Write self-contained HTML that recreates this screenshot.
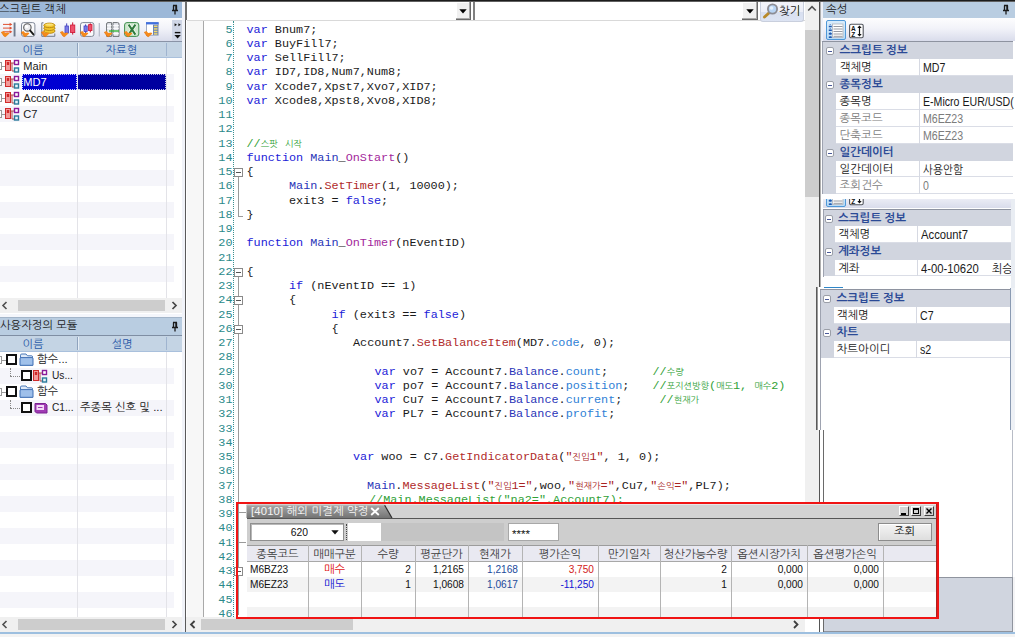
<!DOCTYPE html>
<html lang="ko"><head><meta charset="utf-8"><title>Script Editor</title>
<style>
html,body{margin:0;padding:0;}
body{width:1015px;height:637px;overflow:hidden;background:#fff;position:relative;
 font-family:"Liberation Sans","NanumGothic",sans-serif;font-size:12px;color:#000;}
.a{position:absolute;box-sizing:border-box;}
.t{position:absolute;white-space:pre;line-height:1;}
.ui{font-family:"Liberation Sans","NanumGothic",sans-serif;}
.code{font-family:"Liberation Mono","NanumGothic",monospace;font-size:11.8px;}
.ln{position:absolute;left:187.5px;width:45px;text-align:right;color:#2b8a8a;white-space:pre;height:14.25px;line-height:14.25px;}
.cl{position:absolute;left:247px;white-space:pre;height:14.25px;line-height:14.25px;color:#1a1a1a;}
.k{color:#2222d8;}
.o{color:#2a35b8;}
.m{color:#b02a2a;}
.f{color:#a3289b;}
.p{color:#2f7fd6;}
.c{color:#2fa136;}
.s{color:#a82222;}
.kr{font-family:"Liberation Sans","NanumGothic",sans-serif;font-size:9px;}
.gul{font-family:"Liberation Sans","NanumGothic",sans-serif;font-size:12px;}
</style></head>
<body>
<div class="a" style="left:0px;top:2px;width:186px;height:635px;background:#ffffff;"></div>
<div class="a" style="left:0px;top:2px;width:182px;height:16px;background:#9cb8d8;"></div>
<div class="t ui" style="left:-1px;top:4px;font-size:11.3px;color:#1c1c1c;">스크립트 객체</div>
<svg class="a" style="left:169.5px;top:3.5px" width="10" height="12" viewBox="0 0 10 12"><path d="M3 1.5h4M3.5 1.5v4.5M6.5 1.5v4.5M2 6.5h6M5 6.5v4" stroke="#1a1a1a" stroke-width="1.3" fill="none"/><rect x="5.3" y="1.5" width="1.6" height="5" fill="#1a1a1a"/></svg>
<div class="a" style="left:0px;top:18px;width:182px;height:23px;background:linear-gradient(#fdfdfe 0%,#f2f3f9 45%,#d9dceb 100%);"></div>
<div class="a" style="left:172px;top:20px;width:10px;height:21px;background:#cfd6e6;"></div>
<div class="a" style="left:0px;top:41px;width:182px;height:1px;background:#8a93a6;"></div>
<div class="a" style="left:0px;top:42px;width:182px;height:15px;background:#c4d4e4;"></div>
<div class="a" style="left:0px;top:57px;width:182px;height:1px;background:#a9c0dc;"></div>
<div class="a" style="left:77px;top:43px;width:1px;height:13px;background:#8fa3bd;"></div>
<div class="a" style="left:78px;top:43px;width:1px;height:13px;background:#e6eef6;"></div>
<div class="a" style="left:166px;top:43px;width:1px;height:13px;background:#9fb4cf;"></div>
<div class="t ui" style="left:22.5px;top:45px;font-size:11.3px;color:#2a5aa8;">이름</div>
<div class="t ui" style="left:105.5px;top:45px;font-size:11.3px;color:#2a5aa8;">자료형</div>
<div class="a" style="left:0px;top:74px;width:174px;height:16px;background:#f5f5fa;"></div>
<div class="a" style="left:0px;top:106px;width:174px;height:16px;background:#f5f5fa;"></div>
<div class="a" style="left:0px;top:138px;width:174px;height:16px;background:#f5f5fa;"></div>
<div class="a" style="left:0px;top:170px;width:174px;height:16px;background:#f5f5fa;"></div>
<div class="a" style="left:0px;top:202px;width:174px;height:16px;background:#f5f5fa;"></div>
<div class="a" style="left:0px;top:234px;width:174px;height:16px;background:#f5f5fa;"></div>
<div class="a" style="left:0px;top:266px;width:174px;height:16px;background:#f5f5fa;"></div>
<div class="a" style="left:77px;top:58px;width:1px;height:240px;background:#e3e3e8;"></div>
<div class="a" style="left:166px;top:58px;width:1px;height:240px;background:#e3e3e8;"></div>
<div class="a" style="left:22px;top:74px;width:55px;height:16px;background:#0000d2;border:1px dotted #d8d8ff;"></div>
<div class="a" style="left:78px;top:74px;width:88px;height:16px;background:#00009f;border:1px dotted #c8c8e8;border-left:none;"></div>
<div class="a" style="left:0px;top:62px;width:2px;height:8px;background:#fff;border:1px solid #9a9a9a;border-left:none;"></div>
<div class="a" style="left:2px;top:66px;width:3px;height:1px;background:#9a9a9a;"></div>
<svg class="a" style="left:5px;top:59px" width="15" height="15" viewBox="0 0 15 15"><rect x="0.5" y="1.5" width="5" height="10" fill="#f29a9a" stroke="#d02a2a" stroke-width="1"/><rect x="1.8" y="3" width="2.4" height="3" fill="#d02a2a"/><path d="M5.5 4h3.5M7 4v8h2" stroke="#b04a4a" stroke-width="1" fill="none"/><rect x="9.5" y="1.5" width="4" height="4" fill="#fff" stroke="#8a1a9a" stroke-width="1.4"/><rect x="9.5" y="9" width="4" height="4" fill="#e6f4fa" stroke="#2a7a9a" stroke-width="1.4"/></svg>
<div class="t ui" style="left:23.3px;top:60.5px;font-size:11.1px;color:#1a1a1a;">Main</div>
<div class="a" style="left:0px;top:78px;width:2px;height:8px;background:#fff;border:1px solid #9a9a9a;border-left:none;"></div>
<div class="a" style="left:2px;top:82px;width:3px;height:1px;background:#9a9a9a;"></div>
<svg class="a" style="left:5px;top:75px" width="15" height="15" viewBox="0 0 15 15"><rect x="0.5" y="1.5" width="5" height="10" fill="#f29a9a" stroke="#d02a2a" stroke-width="1"/><rect x="1.8" y="3" width="2.4" height="3" fill="#d02a2a"/><path d="M5.5 4h3.5M7 4v8h2" stroke="#b04a4a" stroke-width="1" fill="none"/><rect x="9.5" y="1.5" width="4" height="4" fill="#fff" stroke="#8a1a9a" stroke-width="1.4"/><rect x="9.5" y="9" width="4" height="4" fill="#e6f4fa" stroke="#2a7a9a" stroke-width="1.4"/></svg>
<div class="t ui" style="left:23.3px;top:76.5px;font-size:11.1px;color:#fff;">MD7</div>
<div class="a" style="left:0px;top:94px;width:2px;height:8px;background:#fff;border:1px solid #9a9a9a;border-left:none;"></div>
<div class="a" style="left:2px;top:98px;width:3px;height:1px;background:#9a9a9a;"></div>
<svg class="a" style="left:5px;top:91px" width="15" height="15" viewBox="0 0 15 15"><rect x="0.5" y="1.5" width="5" height="10" fill="#f29a9a" stroke="#d02a2a" stroke-width="1"/><rect x="1.8" y="3" width="2.4" height="3" fill="#d02a2a"/><path d="M5.5 4h3.5M7 4v8h2" stroke="#b04a4a" stroke-width="1" fill="none"/><rect x="9.5" y="1.5" width="4" height="4" fill="#fff" stroke="#8a1a9a" stroke-width="1.4"/><rect x="9.5" y="9" width="4" height="4" fill="#e6f4fa" stroke="#2a7a9a" stroke-width="1.4"/></svg>
<div class="t ui" style="left:23.3px;top:92.5px;font-size:11.1px;color:#1a1a1a;">Account7</div>
<div class="a" style="left:0px;top:110px;width:2px;height:8px;background:#fff;border:1px solid #9a9a9a;border-left:none;"></div>
<div class="a" style="left:2px;top:114px;width:3px;height:1px;background:#9a9a9a;"></div>
<svg class="a" style="left:5px;top:107px" width="15" height="15" viewBox="0 0 15 15"><rect x="0.5" y="1.5" width="5" height="10" fill="#f29a9a" stroke="#d02a2a" stroke-width="1"/><rect x="1.8" y="3" width="2.4" height="3" fill="#d02a2a"/><path d="M5.5 4h3.5M7 4v8h2" stroke="#b04a4a" stroke-width="1" fill="none"/><rect x="9.5" y="1.5" width="4" height="4" fill="#fff" stroke="#8a1a9a" stroke-width="1.4"/><rect x="9.5" y="9" width="4" height="4" fill="#e6f4fa" stroke="#2a7a9a" stroke-width="1.4"/></svg>
<div class="t ui" style="left:23.3px;top:108.5px;font-size:11.1px;color:#1a1a1a;">C7</div>
<div class="a" style="left:0px;top:298px;width:182px;height:15px;background:#f0f0f0;"></div>
<div class="a" style="left:18px;top:300px;width:147px;height:11px;background:#cdcdcd;"></div>
<svg class="a" style="left:0px;top:298px" width="182" height="15" viewBox="0 0 182 15"><path d="M6.5 4.0L3 7.5L6.5 11.0" stroke="#505050" stroke-width="1.6" fill="none"/><path d="M172.5 4.0L176 7.5L172.5 11.0" stroke="#454545" stroke-width="1.7" fill="none"/></svg>
<div class="a" style="left:0px;top:314px;width:186px;height:4px;background:#f4f6fb;"></div>
<div class="a" style="left:0px;top:317px;width:182px;height:18px;background:#b9cde1;"></div>
<div class="a" style="left:0px;top:317px;width:182px;height:1px;background:#a3b5c9;"></div>
<div class="t ui" style="left:0px;top:320px;font-size:11.3px;color:#1c1c1c;">사용자정의 모듈</div>
<svg class="a" style="left:169.5px;top:320.5px" width="10" height="12" viewBox="0 0 10 12"><path d="M3 1.5h4M3.5 1.5v4.5M6.5 1.5v4.5M2 6.5h6M5 6.5v4" stroke="#1a1a1a" stroke-width="1.3" fill="none"/><rect x="5.3" y="1.5" width="1.6" height="5" fill="#1a1a1a"/></svg>
<div class="a" style="left:0px;top:335px;width:182px;height:1px;background:#7f8ea3;"></div>
<div class="a" style="left:0px;top:336px;width:182px;height:15px;background:#c4d4e4;"></div>
<div class="a" style="left:0px;top:351px;width:182px;height:1px;background:#a9c0dc;"></div>
<div class="a" style="left:77px;top:337px;width:1px;height:13px;background:#8fa3bd;"></div>
<div class="a" style="left:78px;top:337px;width:1px;height:13px;background:#e6eef6;"></div>
<div class="a" style="left:166px;top:337px;width:1px;height:13px;background:#9fb4cf;"></div>
<div class="t ui" style="left:22.5px;top:339px;font-size:11.3px;color:#2a5aa8;">이름</div>
<div class="t ui" style="left:111.5px;top:339px;font-size:11.3px;color:#2a5aa8;">설명</div>
<div class="a" style="left:0px;top:368px;width:174px;height:16px;background:#f5f5fa;"></div>
<div class="a" style="left:0px;top:400px;width:174px;height:16px;background:#f5f5fa;"></div>
<div class="a" style="left:0px;top:432px;width:174px;height:16px;background:#f5f5fa;"></div>
<div class="a" style="left:0px;top:464px;width:174px;height:16px;background:#f5f5fa;"></div>
<div class="a" style="left:0px;top:496px;width:174px;height:16px;background:#f5f5fa;"></div>
<div class="a" style="left:0px;top:528px;width:174px;height:16px;background:#f5f5fa;"></div>
<div class="a" style="left:0px;top:560px;width:174px;height:16px;background:#f5f5fa;"></div>
<div class="a" style="left:0px;top:592px;width:174px;height:16px;background:#f5f5fa;"></div>
<div class="a" style="left:77px;top:352px;width:1px;height:265px;background:#e3e3e8;"></div>
<div class="a" style="left:166px;top:352px;width:1px;height:265px;background:#e3e3e8;"></div>
<div class="a" style="left:0px;top:356px;width:2px;height:8px;background:#fff;border:1px solid #9a9a9a;border-left:none;"></div>
<div class="a" style="left:2px;top:360px;width:4px;height:1px;background:#9a9a9a;"></div>
<div class="a" style="left:6px;top:354px;width:11px;height:11px;background:#fff;border:2px solid #111;"></div>
<svg class="a" style="left:19px;top:353px" width="15" height="13" viewBox="0 0 15 13"><path d="M1.5 12V2.2Q1.5 1 2.8 1H7l1.5 1.8h4.2Q13.5 2.8 13.5 4v8z" fill="#dfeaf8" stroke="#4a78b8" stroke-width="1"/><path d="M1 12.3V5.6Q1 4.6 2 4.6h11q1 0 1 1v6.7z" fill="#9fc0ea" stroke="#3f6fb3" stroke-width="1"/></svg>
<div class="t ui" style="left:37px;top:354px;font-size:11.3px;color:#1a1a1a;">함수...</div>
<div class="a" style="left:10px;top:368px;width:1px;height:8px;border-left:1px dotted #888;"></div>
<div class="a" style="left:10px;top:376px;width:10px;height:1px;border-top:1px dotted #888;"></div>
<div class="a" style="left:21px;top:370px;width:11px;height:11px;background:#fff;border:2px solid #111;"></div>
<svg class="a" style="left:33px;top:369px" width="15" height="15" viewBox="0 0 15 15"><rect x="0.5" y="1.5" width="5" height="10" fill="#f29a9a" stroke="#d02a2a" stroke-width="1"/><rect x="1.8" y="3" width="2.4" height="3" fill="#d02a2a"/><path d="M5.5 4h3.5M7 4v8h2" stroke="#b04a4a" stroke-width="1" fill="none"/><rect x="9.5" y="1.5" width="4" height="4" fill="#fff" stroke="#8a1a9a" stroke-width="1.4"/><rect x="9.5" y="9" width="4" height="4" fill="#e6f4fa" stroke="#2a7a9a" stroke-width="1.4"/></svg>
<div class="t ui" style="left:52px;top:370.5px;font-size:10.2px;color:#1a1a1a;">Us...</div>
<div class="a" style="left:0px;top:388px;width:2px;height:8px;background:#fff;border:1px solid #9a9a9a;border-left:none;"></div>
<div class="a" style="left:2px;top:392px;width:4px;height:1px;background:#9a9a9a;"></div>
<div class="a" style="left:6px;top:386px;width:11px;height:11px;background:#fff;border:2px solid #111;"></div>
<svg class="a" style="left:19px;top:385px" width="15" height="13" viewBox="0 0 15 13"><path d="M1.5 12V2.2Q1.5 1 2.8 1H7l1.5 1.8h4.2Q13.5 2.8 13.5 4v8z" fill="#dfeaf8" stroke="#4a78b8" stroke-width="1"/><path d="M1 12.3V5.6Q1 4.6 2 4.6h11q1 0 1 1v6.7z" fill="#9fc0ea" stroke="#3f6fb3" stroke-width="1"/></svg>
<div class="t ui" style="left:37px;top:386px;font-size:11.3px;color:#1a1a1a;">함수</div>
<div class="a" style="left:10px;top:400px;width:1px;height:8px;border-left:1px dotted #888;"></div>
<div class="a" style="left:10px;top:408px;width:10px;height:1px;border-top:1px dotted #888;"></div>
<div class="a" style="left:21px;top:402px;width:11px;height:11px;background:#fff;border:2px solid #111;"></div>
<svg class="a" style="left:34px;top:402px" width="14" height="12" viewBox="0 0 14 12"><path d="M1 1.5h10.5l1.5 1.5v8H2.5L1 9.5z" fill="#a03cb4" stroke="#7a2090" stroke-width="1"/><rect x="2.5" y="3" width="7.5" height="5" fill="#f3d9f7"/><path d="M4 5.5h4.5" stroke="#a03cb4" stroke-width="1"/></svg>
<div class="t ui" style="left:52px;top:402.5px;font-size:10.2px;color:#1a1a1a;">C1...</div>
<div class="t ui" style="left:80px;top:402px;font-size:11.3px;color:#1a1a1a;">주종목 신호 및 ...</div>
<div class="a" style="left:0px;top:617px;width:182px;height:15px;background:#f0f0f0;"></div>
<div class="a" style="left:18px;top:619px;width:147px;height:11px;background:#cdcdcd;"></div>
<svg class="a" style="left:0px;top:617px" width="182" height="15" viewBox="0 0 182 15"><path d="M6.5 4.0L3 7.5L6.5 11.0" stroke="#505050" stroke-width="1.6" fill="none"/><path d="M172.5 4.0L176 7.5L172.5 11.0" stroke="#454545" stroke-width="1.7" fill="none"/></svg>
<div class="a" style="left:182px;top:2px;width:4px;height:630px;background:#f1f3f9;"></div>
<div class="a" style="left:185px;top:20px;width:1px;height:612px;background:#5a5a5a;"></div>
<div class="a" style="left:185.4px;top:2px;width:2.2px;height:18px;background:#6e6e6e;"></div>
<div class="a" style="left:0px;top:632px;width:1015px;height:2px;background:#9dbfdf;"></div>
<div class="a" style="left:0px;top:634px;width:1015px;height:3px;background:#f3f3f3;"></div>
<svg class="a" style="left:0;top:18px" width="182" height="23" viewBox="0 18 182 23"><path d="M3 24.4H11" stroke="#e05030" stroke-width="1"/><path d="M9.6 22.799999999999997L12.4 24.4L9.6 26.0z" fill="#e05030"/><path d="M3 28.1H11" stroke="#e05030" stroke-width="1"/><path d="M9.6 26.5L12.4 28.1L9.6 29.700000000000003z" fill="#e05030"/><path d="M3 31.8H11" stroke="#e05030" stroke-width="1"/><path d="M9.6 30.2L12.4 31.8L9.6 33.4z" fill="#e05030"/><rect x="13.6" y="22.5" width="1.9" height="14" fill="#6f7a8c"/><path transform="translate(1,30.2)" d="M0.2 1.8L2.4 0.8L4.2 2.9L7.2 2.2L8.4 3.4L4.9 6.5L3 6z" fill="#f58a1c"/><path transform="translate(1,30.2)" d="M0.2 1.8L3 6L4.9 6.5" fill="none" stroke="#e0700c" stroke-width="0.6"/><rect x="21.5" y="22.6" width="13.4" height="13.8" rx="2.2" fill="#fafafc" stroke="#7f8796" stroke-width="1"/><circle cx="27.4" cy="27.4" r="3.7" fill="#ececf0" stroke="#5a5a5a" stroke-width="1.1"/><circle cx="26.6" cy="26.6" r="1.6" fill="#fff"/><path d="M30.2 30.6L33.4 34.4" stroke="#1a1a1a" stroke-width="1.9" stroke-linecap="round"/><path transform="translate(21,30.2)" d="M0.2 1.8L2.4 0.8L4.2 2.9L7.2 2.2L8.4 3.4L4.9 6.5L3 6z" fill="#f58a1c"/><path transform="translate(21,30.2)" d="M0.2 1.8L3 6L4.9 6.5" fill="none" stroke="#e0700c" stroke-width="0.6"/><path d="M43.5 22.8H41.8V36.3H54.8V33.5" fill="none" stroke="#6f7a8c" stroke-width="1"/><ellipse cx="49.4" cy="31" rx="5.6" ry="2.3" fill="#f3c62e" stroke="#b3820c" stroke-width="0.9"/><ellipse cx="49.4" cy="28.2" rx="5.6" ry="2.3" fill="#f3c62e" stroke="#b3820c" stroke-width="0.9"/><ellipse cx="49.4" cy="25.4" rx="5.6" ry="2.3" fill="#f3c62e" stroke="#b3820c" stroke-width="0.9"/><ellipse cx="49.4" cy="24.6" rx="4" ry="1.2" fill="#fbe27a"/><path transform="translate(41,30.2)" d="M0.2 1.8L2.4 0.8L4.2 2.9L7.2 2.2L8.4 3.4L4.9 6.5L3 6z" fill="#f58a1c"/><path transform="translate(41,30.2)" d="M0.2 1.8L3 6L4.9 6.5" fill="none" stroke="#e0700c" stroke-width="0.6"/><path d="M66.7 23.4V34.2" stroke="#3a3ab8" stroke-width="1"/><rect x="65" y="26" width="3.4" height="7" fill="#7a7ae8" stroke="#4444c0" stroke-width="0.8"/><path d="M72.7 22.4V34.6" stroke="#c8102c" stroke-width="1"/><rect x="70.6" y="25" width="4.2" height="7.6" fill="#f0506c" stroke="#cc1434" stroke-width="0.8"/><path transform="translate(60,30.2)" d="M0.2 1.8L2.4 0.8L4.2 2.9L7.2 2.2L8.4 3.4L4.9 6.5L3 6z" fill="#f58a1c"/><path transform="translate(60,30.2)" d="M0.2 1.8L3 6L4.9 6.5" fill="none" stroke="#e0700c" stroke-width="0.6"/><rect x="80.5" y="22.6" width="13.4" height="13.8" rx="2.2" fill="#fafafc" stroke="#7f8796" stroke-width="1"/><path d="M85.6 24.4V33" stroke="#3a3ab8" stroke-width="1"/><rect x="84" y="26" width="3.2" height="5.4" fill="#7a7ae8" stroke="#4444c0" stroke-width="0.8"/><path d="M90.3 23.4V32.4" stroke="#c8102c" stroke-width="1"/><rect x="88.6" y="24.6" width="3.4" height="6" fill="#f0506c" stroke="#cc1434" stroke-width="0.8"/><path transform="translate(80,30.2)" d="M0.2 1.8L2.4 0.8L4.2 2.9L7.2 2.2L8.4 3.4L4.9 6.5L3 6z" fill="#f58a1c"/><path transform="translate(80,30.2)" d="M0.2 1.8L3 6L4.9 6.5" fill="none" stroke="#e0700c" stroke-width="0.6"/><path d="M99.3 23V36.4" stroke="#b4b8c8" stroke-width="1.2"/><path d="M106.6 36.4V24Q106.6 22.6 108 22.6H111.6V36.4zM113 22.6H117.6Q119 22.6 119 24V36.4H113z" fill="#e6e8ee" stroke="#6e7276" stroke-width="1"/><path d="M107 25.6H111.5M113.2 25.6H118.8M107 28.4H111.5M113.2 28.4H118.8M107 33.6H111.5M113.2 33.6H118.8" stroke="#fafafc" stroke-width="1.1"/><path d="M109 31H119" stroke="#2fb52f" stroke-width="1.3"/><path transform="translate(104,30.2)" d="M0.2 1.8L2.4 0.8L4.2 2.9L7.2 2.2L8.4 3.4L4.9 6.5L3 6z" fill="#f58a1c"/><path transform="translate(104,30.2)" d="M0.2 1.8L3 6L4.9 6.5" fill="none" stroke="#e0700c" stroke-width="0.6"/><rect x="124.6" y="22.6" width="14.2" height="13.8" rx="2.4" fill="#cfe8cf" stroke="#3f8f4f" stroke-width="1"/><path d="M128.6 24.6L135.4 34.6M135.4 24.6L128.6 34.6" stroke="#f2faf2" stroke-width="3.6"/><path d="M128.6 24.6L135.4 34.6M135.4 24.6L128.6 34.6" stroke="#2f7a3c" stroke-width="2"/><path transform="translate(124,30.2)" d="M0.2 1.8L2.4 0.8L4.2 2.9L7.2 2.2L8.4 3.4L4.9 6.5L3 6z" fill="#f58a1c"/><path transform="translate(124,30.2)" d="M0.2 1.8L3 6L4.9 6.5" fill="none" stroke="#e0700c" stroke-width="0.6"/><rect x="146.4" y="22.6" width="11.8" height="12.6" fill="#fff" stroke="#8a98b8" stroke-width="0.8"/><rect x="146" y="22.2" width="12.6" height="2.2" fill="#3f6fe0"/><rect x="153" y="24.6" width="5" height="10.4" fill="#6f86b4"/><rect x="154" y="25.6" width="3.4" height="1.4" fill="#f5dc6a"/><rect x="154" y="28.2" width="3.4" height="1.4" fill="#f5dc6a"/><rect x="154" y="30.8" width="3.4" height="1.4" fill="#f5dc6a"/><rect x="154" y="33.2" width="3.4" height="1.4" fill="#f5dc6a"/><path transform="translate(144,30.2)" d="M0.2 1.8L2.4 0.8L4.2 2.9L7.2 2.2L8.4 3.4L4.9 6.5L3 6z" fill="#f58a1c"/><path transform="translate(144,30.2)" d="M0.2 1.8L3 6L4.9 6.5" fill="none" stroke="#e0700c" stroke-width="0.6"/><path d="M174.6 23.2L177 24.7L174.6 26.2zM178.4 23.2L180.8 24.7L178.4 26.2z" fill="#111"/><path d="M174.8 32.6H180.4" stroke="#111" stroke-width="1.4"/><path d="M174.4 35H180.8L177.6 38.4z" fill="#111"/></svg>
<div class="a" style="left:187px;top:2px;width:618px;height:18px;background:#ffffff;"></div>
<div class="a" style="left:187px;top:20px;width:618px;height:1px;background:#d9d9d9;"></div>
<div class="a" style="left:456px;top:2px;width:15px;height:18px;background:#f0f0f0;border-right:1px solid #6a6a6a;border-bottom:1px solid #6a6a6a;box-shadow:inset -1px -1px 0 #a8a8a8, inset 1px 1px 0 #fff;"></div>
<svg class="a" style="left:459.0px;top:9px" width="8" height="5" viewBox="0 0 8 5"><path d="M0.3 0.3h7.4L4 4.4z" fill="#000"/></svg>
<div class="a" style="left:473px;top:2px;width:2px;height:18px;background:#808080;"></div>
<div class="a" style="left:742px;top:2px;width:16px;height:18px;background:#f0f0f0;border-right:1px solid #6a6a6a;border-bottom:1px solid #6a6a6a;box-shadow:inset -1px -1px 0 #a8a8a8, inset 1px 1px 0 #fff;"></div>
<svg class="a" style="left:745.5px;top:9px" width="8" height="5" viewBox="0 0 8 5"><path d="M0.3 0.3h7.4L4 4.4z" fill="#000"/></svg>
<div class="a" style="left:760px;top:2px;width:44px;height:20px;background:linear-gradient(#f3f4fa 0%,#eceef7 50%,#d8dff0 52%,#dde4f3 100%);border:1px solid #c9cfdd;border-top:none;border-radius:0 0 3px 3px;"></div>
<svg class="a" style="left:762px;top:3px" width="17" height="17" viewBox="0 0 17 17"><path d="M7.5 9.5L2.5 14" stroke="#b98a2a" stroke-width="3" stroke-linecap="round"/><circle cx="10.5" cy="6" r="4.6" fill="#b8d4f4" stroke="#8c8c94" stroke-width="1.8"/><circle cx="9.6" cy="5" r="1.8" fill="#e4f0fc"/></svg>
<div class="t ui" style="left:779px;top:5.5px;font-size:11.5px;color:#1a1a1a;">찾기</div>
<div class="a" style="left:798px;top:5px;width:1px;height:11px;background:#555;"></div>
<div class="a" style="left:187px;top:21px;width:16px;height:596px;background:#f7f7f7;"></div>
<div class="a" style="left:203px;top:21px;width:1px;height:596px;background:#a9a9a9;"></div>
<div class="a" style="left:233px;top:21px;width:1px;height:596px;border-left:1px dotted #3a8f8f;"></div>
<div class="a" style="left:805px;top:2px;width:14px;height:615px;background:#f0f0f0;"></div>
<div class="a" style="left:805px;top:30px;width:14px;height:167px;background:#cdcdcd;"></div>
<svg class="a" style="left:805px;top:2px" width="14" height="14" viewBox="0 0 14 14"><path d="M3.2 8.5L7 4.6L10.8 8.5" stroke="#505050" stroke-width="1.6" fill="none"/></svg>
<div class="code">
<div class="ln" style="top:22.50px">5</div><div class="cl" style="left:246.5px;top:22.50px"><span class="k">var</span> Bnum7;</div>
<div class="ln" style="top:36.75px">6</div><div class="cl" style="left:246.5px;top:36.75px"><span class="k">var</span> BuyFill7;</div>
<div class="ln" style="top:51.00px">7</div><div class="cl" style="left:246.5px;top:51.00px"><span class="k">var</span> SellFill7;</div>
<div class="ln" style="top:65.25px">8</div><div class="cl" style="left:246.5px;top:65.25px"><span class="k">var</span> ID7,ID8,Num7,Num8;</div>
<div class="ln" style="top:79.50px">9</div><div class="cl" style="left:246.5px;top:79.50px"><span class="k">var</span> Xcode7,Xpst7,Xvo7,XID7;</div>
<div class="ln" style="top:93.75px">10</div><div class="cl" style="left:246.5px;top:93.75px"><span class="k">var</span> Xcode8,Xpst8,Xvo8,XID8;</div>
<div class="ln" style="top:108.00px">11</div>
<div class="ln" style="top:122.25px">12</div>
<div class="ln" style="top:136.50px">13</div><div class="cl" style="left:246.5px;top:136.50px"><span class="c">//<span class="kr">스팟</span> <span class="kr">시작</span></span></div>
<div class="ln" style="top:150.75px">14</div><div class="cl" style="left:246.5px;top:150.75px"><span class="k">function</span> <span class="o">Main</span>_<span class="f">OnStart</span>()</div>
<div class="ln" style="top:165.00px">15</div><div class="cl" style="left:246.5px;top:165.00px">{</div>
<div class="ln" style="top:179.25px">16</div><div class="cl" style="left:289.0px;top:179.25px"><span class="o">Main</span>.<span class="m">SetTimer</span>(1, 10000);</div>
<div class="ln" style="top:193.50px">17</div><div class="cl" style="left:289.0px;top:193.50px">exit3 = <span class="k">false</span>;</div>
<div class="ln" style="top:207.75px">18</div><div class="cl" style="left:246.5px;top:207.75px">}</div>
<div class="ln" style="top:222.00px">19</div>
<div class="ln" style="top:236.25px">20</div><div class="cl" style="left:246.5px;top:236.25px"><span class="k">function</span> <span class="o">Main</span>_<span class="f">OnTimer</span>(nEventID)</div>
<div class="ln" style="top:250.50px">21</div>
<div class="ln" style="top:264.75px">22</div><div class="cl" style="left:246.5px;top:264.75px">{</div>
<div class="ln" style="top:279.00px">23</div><div class="cl" style="left:289.0px;top:279.00px"><span class="k">if</span> (nEventID == 1)</div>
<div class="ln" style="top:293.25px">24</div><div class="cl" style="left:289.0px;top:293.25px">{</div>
<div class="ln" style="top:307.50px">25</div><div class="cl" style="left:331.5px;top:307.50px"><span class="k">if</span> (exit3 == <span class="k">false</span>)</div>
<div class="ln" style="top:321.75px">26</div><div class="cl" style="left:331.5px;top:321.75px">{</div>
<div class="ln" style="top:336.00px">27</div><div class="cl" style="left:353.0px;top:336.00px">Account7.<span class="m">SetBalanceItem</span>(MD7.<span class="p">code</span>, 0);</div>
<div class="ln" style="top:350.25px">28</div>
<div class="ln" style="top:364.50px">29</div><div class="cl" style="left:374.5px;top:364.50px"><span class="k">var</span> vo7 = Account7.<span class="o">Balance</span>.<span class="p">count</span>;</div><div class="cl" style="left:652.5px;top:364.50px"><span class="c">//<span class="kr">수량</span></span></div>
<div class="ln" style="top:378.75px">30</div><div class="cl" style="left:374.5px;top:378.75px"><span class="k">var</span> po7 = Account7.<span class="o">Balance</span>.<span class="p">position</span>;</div><div class="cl" style="left:652.5px;top:378.75px"><span class="c">//<span class="kr">포지션방향</span>(<span class="kr">매도</span>1, <span class="kr">매수</span>2)</span></div>
<div class="ln" style="top:393.00px">31</div><div class="cl" style="left:374.5px;top:393.00px"><span class="k">var</span> Cu7 = Account7.<span class="o">Balance</span>.<span class="p">current</span>;</div><div class="cl" style="left:659.5px;top:393.00px"><span class="c">//<span class="kr">현재가</span></span></div>
<div class="ln" style="top:407.25px">32</div><div class="cl" style="left:374.5px;top:407.25px"><span class="k">var</span> PL7 = Account7.<span class="o">Balance</span>.<span class="p">profit</span>;</div>
<div class="ln" style="top:421.50px">33</div>
<div class="ln" style="top:435.75px">34</div>
<div class="ln" style="top:450.00px">35</div><div class="cl" style="left:353.0px;top:450.00px"><span class="k">var</span> woo = C7.<span class="m">GetIndicatorData</span>(<span class="s">&quot;<span class="kr">진입</span>1&quot;</span>, 1, 0);</div>
<div class="ln" style="top:464.25px">36</div>
<div class="ln" style="top:478.50px">37</div><div class="cl" style="left:367.0px;top:478.50px"><span class="o">Main</span>.<span class="m">MessageList</span>(<span class="s">&quot;<span class="kr">진입</span>1=&quot;</span>,woo,<span class="s">&quot;<span class="kr">현재가</span>=&quot;</span>,Cu7,<span class="s">&quot;<span class="kr">손익</span>=&quot;</span>,PL7);</div>
<div class="ln" style="top:492.75px">38</div><div class="cl" style="left:369.0px;top:492.75px"><span class="c">//Main.MessageList(&quot;na2=&quot;,Account7);</span></div>
<div class="ln" style="top:507.00px">39</div>
<div class="ln" style="top:521.25px">40</div>
<div class="ln" style="top:535.50px">41</div>
<div class="ln" style="top:549.75px">42</div>
<div class="ln" style="top:564.00px">43</div>
<div class="ln" style="top:578.25px">44</div>
<div class="ln" style="top:592.50px">45</div>
<div class="ln" style="top:606.75px">46</div>
</div>
<div class="a" style="left:238px;top:177.0px;width:1px;height:38.75px;background:#9a9a9a;"></div>
<div class="a" style="left:238px;top:215.75px;width:5px;height:1px;background:#9a9a9a;"></div>
<div class="a" style="left:234px;top:168px;width:9px;height:9px;background:#fff;border:1px solid #8a8a8a;"></div>
<div class="a" style="left:236px;top:172px;width:5px;height:1px;background:#555;"></div>
<div class="a" style="left:238px;top:276.75px;width:1px;height:338.0px;background:#9a9a9a;"></div>
<div class="a" style="left:234px;top:268px;width:9px;height:9px;background:#fff;border:1px solid #8a8a8a;"></div>
<div class="a" style="left:236px;top:272px;width:5px;height:1px;background:#555;"></div>
<div class="a" style="left:234px;top:296px;width:9px;height:9px;background:#fff;border:1px solid #8a8a8a;"></div>
<div class="a" style="left:236px;top:300px;width:5px;height:1px;background:#555;"></div>
<div class="a" style="left:234px;top:325px;width:9px;height:9px;background:#fff;border:1px solid #8a8a8a;"></div>
<div class="a" style="left:236px;top:329px;width:5px;height:1px;background:#555;"></div>
<div class="a" style="left:186px;top:617px;width:619px;height:15px;background:#f0f0f0;"></div>
<div class="a" style="left:201px;top:619px;width:152px;height:11px;background:#cdcdcd;"></div>
<svg class="a" style="left:186px;top:617px" width="619" height="15" viewBox="0 0 619 15"><path d="M8.6 4L5 7.5L8.6 11" stroke="#404040" stroke-width="1.8" fill="none"/><path d="M608 4L611.5 7.5L608 11" stroke="#404040" stroke-width="1.8" fill="none"/></svg>
<div class="a" style="left:819px;top:2px;width:196px;height:630px;background:#ffffff;"></div>
<div class="a" style="left:821px;top:2px;width:2px;height:40px;background:#eef1f8;"></div>
<div class="a" style="left:823px;top:2px;width:192px;height:16px;background:#b9cde1;"></div>
<div class="t ui" style="left:826px;top:4px;font-size:11.5px;color:#1c1c1c;">속성</div>
<svg class="a" style="left:1000.5px;top:3.5px" width="10" height="12" viewBox="0 0 10 12"><path d="M3 1.5h4M3.5 1.5v4.5M6.5 1.5v4.5M2 6.5h6M5 6.5v4" stroke="#1a1a1a" stroke-width="1.3" fill="none"/><rect x="5.3" y="1.5" width="1.6" height="5" fill="#1a1a1a"/></svg>
<div class="a" style="left:823px;top:18px;width:192px;height:23px;overflow:hidden;"><div class="a" style="left:0;top:0px;width:192px;height:23px;background:linear-gradient(#fdfdfe 0%,#f2f3f9 45%,#d9dceb 100%);"><div class="a" style="left:3px;top:2px;width:20px;height:20px;background:linear-gradient(#d9ecfb,#b9dcf7);border:1px solid #4f98d8;border-radius:2px;"></div><svg class="a" style="left:5px;top:5px" width="16" height="16" viewBox="0 0 16 16"><rect x="4.5" y="1" width="10.5" height="13.5" fill="#fff" stroke="#b0b4bc" stroke-width="0.8"/><path d="M5.5 3.5h9M5.5 6h9M5.5 8.5h9M5.5 11h9M5.5 13.3h9" stroke="#8a8e98" stroke-width="0.9"/><path d="M2.2 1v14" stroke="#2a6ab8" stroke-width="0.8" stroke-dasharray="1 1"/><path d="M0.8 3.5h3M0.8 7.2h3M0.8 10.8h3M0.8 14.2h3" stroke="#2058b0" stroke-width="1.6"/></svg><svg class="a" style="left:26px;top:5px" width="15" height="16" viewBox="0 0 15 16"><rect x="0.6" y="1.2" width="13.6" height="13.6" rx="1.5" fill="#fff" stroke="#50545c" stroke-width="1.1"/><text x="2" y="7.5" font-family="Liberation Sans,sans-serif" font-size="6.5" font-weight="bold" fill="#111">A</text><text x="2.2" y="13.6" font-family="Liberation Sans,sans-serif" font-size="6.5" font-weight="bold" fill="#111">Z</text><path d="M10.5 3v10" stroke="#111" stroke-width="1.2"/><path d="M8.3 5l2.2-2.6L12.7 5zM8.3 11l2.2 2.6L12.7 11z" fill="#111"/></svg></div></div>
<div class="a" style="left:822px;top:41px;width:191px;height:1px;background:#8e93a0;"></div>
<div class="a" style="left:822px;top:42px;width:1px;height:152.37px;background:#9ea3b0;"></div>
<div class="a" style="left:823px;top:42px;width:190px;height:17px;background:#d1d5df;"></div>
<div class="a" style="left:825.5px;top:47px;width:8px;height:8px;background:#fff;border:1px solid #9b9fa8;border-radius:2px;"></div>
<div class="a" style="left:827.5px;top:50.5px;width:4px;height:1px;background:#4a5a9a;"></div>
<div class="t ui" style="left:839.5px;top:45px;font-size:11.5px;color:#2b4a96;font-weight:bold;">스크립트 정보</div>
<div class="a" style="left:823px;top:59px;width:13px;height:17px;background:#d1d5df;"></div>
<div class="a" style="left:836px;top:59px;width:177px;height:17px;background:#fff;border-bottom:1px solid #dadde6;"></div>
<div class="a" style="left:919px;top:59px;width:1px;height:17px;background:#d6d9e2;"></div>
<div class="t ui" style="left:839.5px;top:62px;font-size:11.5px;color:#1a1a1a;">객체명</div>
<div class="t ui" style="left:923px;top:61.5px;font-size:12.2px;color:#1a1a1a;transform:scaleX(0.87);transform-origin:0 0;">MD7</div>
<div class="a" style="left:823px;top:76px;width:190px;height:17px;background:#d1d5df;"></div>
<div class="a" style="left:825.5px;top:81px;width:8px;height:8px;background:#fff;border:1px solid #9b9fa8;border-radius:2px;"></div>
<div class="a" style="left:827.5px;top:84.5px;width:4px;height:1px;background:#4a5a9a;"></div>
<div class="t ui" style="left:839.5px;top:79px;font-size:11.5px;color:#2b4a96;font-weight:bold;">종목정보</div>
<div class="a" style="left:823px;top:93px;width:13px;height:17px;background:#d1d5df;"></div>
<div class="a" style="left:836px;top:93px;width:177px;height:17px;background:#fff;border-bottom:1px solid #dadde6;"></div>
<div class="a" style="left:919px;top:93px;width:1px;height:17px;background:#d6d9e2;"></div>
<div class="t ui" style="left:839.5px;top:96px;font-size:11.5px;color:#1a1a1a;">종목명</div>
<div class="t ui" style="left:923px;top:95.5px;font-size:12.2px;color:#1a1a1a;transform:scaleX(0.87);transform-origin:0 0;">E-Micro EUR/USD(</div>
<div class="a" style="left:823px;top:110px;width:13px;height:17px;background:#d1d5df;"></div>
<div class="a" style="left:836px;top:110px;width:177px;height:17px;background:#fff;border-bottom:1px solid #dadde6;"></div>
<div class="a" style="left:919px;top:110px;width:1px;height:17px;background:#d6d9e2;"></div>
<div class="t ui" style="left:839.5px;top:113px;font-size:11.5px;color:#7c7c7c;">종목코드</div>
<div class="t ui" style="left:923px;top:112.5px;font-size:12.2px;color:#7c7c7c;transform:scaleX(0.87);transform-origin:0 0;">M6EZ23</div>
<div class="a" style="left:823px;top:127px;width:13px;height:17px;background:#d1d5df;"></div>
<div class="a" style="left:836px;top:127px;width:177px;height:17px;background:#fff;border-bottom:1px solid #dadde6;"></div>
<div class="a" style="left:919px;top:127px;width:1px;height:17px;background:#d6d9e2;"></div>
<div class="t ui" style="left:839.5px;top:130px;font-size:11.5px;color:#7c7c7c;">단축코드</div>
<div class="t ui" style="left:923px;top:129.5px;font-size:12.2px;color:#7c7c7c;transform:scaleX(0.87);transform-origin:0 0;">M6EZ23</div>
<div class="a" style="left:823px;top:144px;width:190px;height:17px;background:#d1d5df;"></div>
<div class="a" style="left:825.5px;top:149px;width:8px;height:8px;background:#fff;border:1px solid #9b9fa8;border-radius:2px;"></div>
<div class="a" style="left:827.5px;top:152.5px;width:4px;height:1px;background:#4a5a9a;"></div>
<div class="t ui" style="left:839.5px;top:147px;font-size:11.5px;color:#2b4a96;font-weight:bold;">일간데이터</div>
<div class="a" style="left:823px;top:161px;width:13px;height:16px;background:#d1d5df;"></div>
<div class="a" style="left:836px;top:161px;width:177px;height:16px;background:#fff;border-bottom:1px solid #dadde6;"></div>
<div class="a" style="left:919px;top:161px;width:1px;height:16px;background:#d6d9e2;"></div>
<div class="t ui" style="left:839.5px;top:164px;font-size:11.5px;color:#1a1a1a;">일간데이터</div>
<div class="t ui" style="left:923px;top:163.5px;font-size:12.2px;color:#1a1a1a;transform:scaleX(0.87);transform-origin:0 0;">사용안함</div>
<div class="a" style="left:823px;top:177px;width:13px;height:17px;background:#d1d5df;"></div>
<div class="a" style="left:836px;top:177px;width:177px;height:17px;background:#fff;border-bottom:1px solid #dadde6;"></div>
<div class="a" style="left:919px;top:177px;width:1px;height:17px;background:#d6d9e2;"></div>
<div class="t ui" style="left:839.5px;top:180px;font-size:11.5px;color:#7c7c7c;">조회건수</div>
<div class="t ui" style="left:923px;top:179.5px;font-size:12.2px;color:#7c7c7c;transform:scaleX(0.87);transform-origin:0 0;">0</div>
<div class="a" style="left:823px;top:198.5px;width:192px;height:10px;overflow:hidden;"><div class="a" style="left:0;top:-13.5px;width:192px;height:23px;background:linear-gradient(#fdfdfe 0%,#f2f3f9 45%,#d9dceb 100%);"><div class="a" style="left:3px;top:2px;width:20px;height:20px;background:linear-gradient(#d9ecfb,#b9dcf7);border:1px solid #4f98d8;border-radius:2px;"></div><svg class="a" style="left:5px;top:5px" width="16" height="16" viewBox="0 0 16 16"><rect x="4.5" y="1" width="10.5" height="13.5" fill="#fff" stroke="#b0b4bc" stroke-width="0.8"/><path d="M5.5 3.5h9M5.5 6h9M5.5 8.5h9M5.5 11h9M5.5 13.3h9" stroke="#8a8e98" stroke-width="0.9"/><path d="M2.2 1v14" stroke="#2a6ab8" stroke-width="0.8" stroke-dasharray="1 1"/><path d="M0.8 3.5h3M0.8 7.2h3M0.8 10.8h3M0.8 14.2h3" stroke="#2058b0" stroke-width="1.6"/></svg><svg class="a" style="left:26px;top:5px" width="15" height="16" viewBox="0 0 15 16"><rect x="0.6" y="1.2" width="13.6" height="13.6" rx="1.5" fill="#fff" stroke="#50545c" stroke-width="1.1"/><text x="2" y="7.5" font-family="Liberation Sans,sans-serif" font-size="6.5" font-weight="bold" fill="#111">A</text><text x="2.2" y="13.6" font-family="Liberation Sans,sans-serif" font-size="6.5" font-weight="bold" fill="#111">Z</text><path d="M10.5 3v10" stroke="#111" stroke-width="1.2"/><path d="M8.3 5l2.2-2.6L12.7 5zM8.3 11l2.2 2.6L12.7 11z" fill="#111"/></svg></div></div>
<div class="a" style="left:823px;top:208.5px;width:188px;height:1px;background:#8e93a0;"></div>
<div class="a" style="left:823px;top:209.5px;width:1px;height:67.0px;background:#9ea3b0;"></div>
<div class="a" style="left:824px;top:210px;width:187px;height:16px;background:#d1d5df;"></div>
<div class="a" style="left:824.5px;top:215px;width:8px;height:8px;background:#fff;border:1px solid #9b9fa8;border-radius:2px;"></div>
<div class="a" style="left:826.5px;top:218.5px;width:4px;height:1px;background:#4a5a9a;"></div>
<div class="t ui" style="left:838px;top:213px;font-size:11.5px;color:#2b4a96;font-weight:bold;">스크립트 정보</div>
<div class="a" style="left:824px;top:226px;width:11px;height:17px;background:#d1d5df;"></div>
<div class="a" style="left:835px;top:226px;width:176px;height:17px;background:#fff;border-bottom:1px solid #dadde6;"></div>
<div class="a" style="left:917px;top:226px;width:1px;height:17px;background:#d6d9e2;"></div>
<div class="t ui" style="left:838px;top:229px;font-size:11.5px;color:#1a1a1a;">객체명</div>
<div class="t ui" style="left:921px;top:228.5px;font-size:12.2px;color:#1a1a1a;transform:scaleX(0.925);transform-origin:0 0;">Account7</div>
<div class="a" style="left:824px;top:243px;width:187px;height:17px;background:#d1d5df;"></div>
<div class="a" style="left:824.5px;top:248px;width:8px;height:8px;background:#fff;border:1px solid #9b9fa8;border-radius:2px;"></div>
<div class="a" style="left:826.5px;top:251.5px;width:4px;height:1px;background:#4a5a9a;"></div>
<div class="t ui" style="left:838px;top:246px;font-size:11.5px;color:#2b4a96;font-weight:bold;">계좌정보</div>
<div class="a" style="left:824px;top:260px;width:11px;height:16px;background:#d1d5df;"></div>
<div class="a" style="left:835px;top:260px;width:176px;height:16px;background:#fff;border-bottom:1px solid #dadde6;"></div>
<div class="a" style="left:917px;top:260px;width:1px;height:16px;background:#d6d9e2;"></div>
<div class="t ui" style="left:838px;top:263px;font-size:11.5px;color:#1a1a1a;">계좌</div>
<div class="t ui" style="left:921px;top:262.5px;font-size:12.2px;color:#1a1a1a;transform:scaleX(0.925);transform-origin:0 0;">4-00-10620<span style="letter-spacing:1.3px">   </span>최승</div>
<div class="a" style="left:1011px;top:199px;width:4px;height:89px;background:#e9edf3;"></div>
<div class="a" style="left:824px;top:287px;width:19px;height:1px;background:#2f86c8;"></div>
<div class="a" style="left:816px;top:287px;width:4px;height:143px;background:#ffffff;"></div>
<div class="a" style="left:820px;top:289px;width:191px;height:1px;background:#8e93a0;"></div>
<div class="a" style="left:820px;top:290px;width:1px;height:68px;background:#9ea3b0;"></div>
<div class="a" style="left:821px;top:290px;width:190px;height:17px;background:#d1d5df;"></div>
<div class="a" style="left:823px;top:295px;width:8px;height:8px;background:#fff;border:1px solid #9b9fa8;border-radius:2px;"></div>
<div class="a" style="left:825px;top:298.5px;width:4px;height:1px;background:#4a5a9a;"></div>
<div class="t ui" style="left:836.5px;top:293px;font-size:11.5px;color:#2b4a96;font-weight:bold;">스크립트 정보</div>
<div class="a" style="left:821px;top:307px;width:13px;height:17px;background:#d1d5df;"></div>
<div class="a" style="left:834px;top:307px;width:177px;height:17px;background:#fff;border-bottom:1px solid #dadde6;"></div>
<div class="a" style="left:916px;top:307px;width:1px;height:17px;background:#d6d9e2;"></div>
<div class="t ui" style="left:836.5px;top:310px;font-size:11.5px;color:#1a1a1a;">객체명</div>
<div class="t ui" style="left:920px;top:309.5px;font-size:12.2px;color:#1a1a1a;transform:scaleX(0.87);transform-origin:0 0;">C7</div>
<div class="a" style="left:821px;top:324px;width:190px;height:17px;background:#d1d5df;"></div>
<div class="a" style="left:823px;top:329px;width:8px;height:8px;background:#fff;border:1px solid #9b9fa8;border-radius:2px;"></div>
<div class="a" style="left:825px;top:332.5px;width:4px;height:1px;background:#4a5a9a;"></div>
<div class="t ui" style="left:836.5px;top:327px;font-size:11.5px;color:#2b4a96;font-weight:bold;">차트</div>
<div class="a" style="left:821px;top:341px;width:13px;height:17px;background:#d1d5df;"></div>
<div class="a" style="left:834px;top:341px;width:177px;height:17px;background:#fff;border-bottom:1px solid #dadde6;"></div>
<div class="a" style="left:916px;top:341px;width:1px;height:17px;background:#d6d9e2;"></div>
<div class="t ui" style="left:836.5px;top:344px;font-size:11.5px;color:#1a1a1a;">차트아이디</div>
<div class="t ui" style="left:920px;top:343.5px;font-size:12.2px;color:#1a1a1a;transform:scaleX(0.87);transform-origin:0 0;">s2</div>
<div class="a" style="left:820px;top:358px;width:1px;height:72px;background:#9ea3b0;"></div>
<div class="a" style="left:1010px;top:288px;width:1px;height:142px;background:#8a9ab2;"></div>
<div class="a" style="left:1011px;top:288px;width:4px;height:142px;background:#eef1f6;"></div>
<div class="a" style="left:1012px;top:430px;width:1px;height:147px;background:#b8bcc6;"></div>
<div class="a" style="left:819px;top:2px;width:1px;height:285px;background:#4e4e4e;"></div>
<div class="a" style="left:820px;top:2px;width:1px;height:285px;background:#b0b0b0;"></div>
<div class="a" style="left:816px;top:287px;width:1px;height:143px;background:#5a5a5a;"></div>
<div class="a" style="left:817px;top:287px;width:1px;height:143px;background:#9a9a9a;"></div>
<div class="a" style="left:819px;top:430px;width:1px;height:202px;background:#555555;"></div>
<div class="a" style="left:823px;top:430px;width:1px;height:202px;background:#6a6a6a;"></div>
<div class="a" style="left:820px;top:430px;width:3px;height:202px;background:#ffffff;"></div>
<div class="a" style="left:824px;top:577px;width:189px;height:55px;background:#d0d5df;border:1px solid #8f949e;border-left:none;"></div>
<div class="a" style="left:1013px;top:577px;width:2px;height:55px;background:#f4f4f6;"></div>
<div class="a" style="left:246.5px;top:504px;width:689.5px;height:113px;background:#ffffff;"></div>
<div class="a" style="left:234px;top:567px;width:9px;height:9px;background:#fff;border:1px solid #8a8a8a;"></div>
<div class="a" style="left:236px;top:571px;width:5px;height:1px;background:#555;"></div>
<div class="a" style="left:239px;top:511.5px;width:7px;height:1px;background:#9a9a9a;"></div>
<div class="a" style="left:239px;top:541.5px;width:7px;height:1px;background:#9a9a9a;"></div>
<div class="a" style="left:246.5px;top:504px;width:689.5px;height:14px;background:#d2d2d2;"></div>
<div class="a" style="left:246.5px;top:504px;width:689.5px;height:1px;background:#e6e6e6;"></div>
<svg class="a" style="left:246px;top:504px" width="150" height="15" viewBox="0 0 150 15"><defs><linearGradient id="tg" x1="0" y1="0" x2="0" y2="1"><stop offset="0" stop-color="#a6a6a6"/><stop offset="1" stop-color="#747474"/></linearGradient></defs><path d="M0.5 1H138.5L146 14H0.5z" fill="url(#tg)"/><path d="M138.5 1L146 14" stroke="#2e2e2e" stroke-width="1.2"/><path d="M0.5 1H138.5" stroke="#bdbdbd" stroke-width="1"/></svg>
<div class="t ui" style="left:251px;top:506px;font-size:11.3px;color:#f4f4f4;letter-spacing:0.15px;">[4010] 해외 미결제 약정</div>
<svg class="a" style="left:370px;top:507px" width="10" height="9" viewBox="0 0 10 9"><path d="M1.2 1L8.8 8M8.8 1L1.2 8" stroke="#fff" stroke-width="1.9"/></svg>
<div class="a" style="left:246.5px;top:517.5px;width:689.5px;height:1.5px;background:#555555;"></div>
<div class="a" style="left:246.5px;top:519px;width:689.5px;height:26px;background:#cecece;"></div>
<div class="a" style="left:250px;top:523px;width:94px;height:18px;background:#fff;border:1px solid #8f8f8f;box-shadow:inset 1px 1px 0 #b8b8b8;"></div>
<div class="t ui" style="left:270px;top:527px;width:38px;text-align:right;font-size:11.5px;color:#111;transform:scaleX(0.9);transform-origin:100% 0;">620</div>
<svg class="a" style="left:331px;top:530px" width="8" height="5" viewBox="0 0 8 5"><path d="M0.3 0.3h7.4L4 4.4z" fill="#111"/></svg>
<div class="a" style="left:346px;top:524px;width:1px;height:16px;border-left:1.5px dotted #444;"></div>
<div class="a" style="left:348px;top:523px;width:33px;height:18px;background:#fff;"></div>
<div class="a" style="left:381px;top:523px;width:123px;height:18px;background:#c4c4c4;"></div>
<div class="a" style="left:508px;top:523px;width:51px;height:18px;background:#fff;border:1px solid #a8a8a8;"></div>
<div class="t ui" style="left:512px;top:529px;font-size:11.5px;color:#111;">****</div>
<div class="a" style="left:878px;top:523px;width:54px;height:18px;background:linear-gradient(#f4f4f4,#dedede);border:1px solid #8c8c8c;box-shadow:inset 1px 1px 0 #fff;"></div>
<div class="t ui" style="left:894px;top:526px;font-size:11.3px;color:#111;">조회</div>
<div class="a" style="left:899px;top:505.5px;width:10px;height:10.5px;background:#d4d4d4;border:1px solid #fff;border-right-color:#404040;border-bottom-color:#404040;"></div>
<div class="a" style="left:901px;top:513px;width:5px;height:2px;background:#000;"></div>
<div class="a" style="left:911px;top:505.5px;width:10px;height:10.5px;background:#d4d4d4;border:1px solid #fff;border-right-color:#404040;border-bottom-color:#404040;"></div>
<div class="a" style="left:913px;top:508px;width:6px;height:6px;border:1px solid #000;border-top-width:2px;"></div>
<div class="a" style="left:923.5px;top:505.5px;width:10px;height:10.5px;background:#d4d4d4;border:1px solid #fff;border-right-color:#404040;border-bottom-color:#404040;"></div>
<svg class="a" style="left:925.5px;top:508px" width="6" height="6" viewBox="0 0 6 6"><path d="M0.5 0.5L5.5 5.5M5.5 0.5L0.5 5.5" stroke="#000" stroke-width="1.4"/></svg>
<div class="a" style="left:247px;top:545px;width:689px;height:16px;background:#e9e9f1;"></div>
<div class="a" style="left:247px;top:545px;width:689px;height:1px;background:#9c9c9c;"></div>
<div class="a" style="left:247px;top:561px;width:689px;height:1px;background:#a8a8a8;"></div>
<div class="a" style="left:247px;top:577px;width:689px;height:14.5px;background:#f3f3f3;"></div>
<div class="a" style="left:247px;top:606.5px;width:689px;height:10.5px;background:#f3f3f3;"></div>
<div class="a" style="left:308px;top:545px;width:1px;height:72px;background:#b4b4b4;"></div>
<div class="a" style="left:361px;top:545px;width:1px;height:72px;background:#b4b4b4;"></div>
<div class="a" style="left:415px;top:545px;width:1px;height:72px;background:#b4b4b4;"></div>
<div class="a" style="left:468px;top:545px;width:1px;height:72px;background:#b4b4b4;"></div>
<div class="a" style="left:522px;top:545px;width:1px;height:72px;background:#b4b4b4;"></div>
<div class="a" style="left:598px;top:545px;width:1px;height:72px;background:#b4b4b4;"></div>
<div class="a" style="left:660px;top:545px;width:1px;height:72px;background:#b4b4b4;"></div>
<div class="a" style="left:731px;top:545px;width:1px;height:72px;background:#b4b4b4;"></div>
<div class="a" style="left:807px;top:545px;width:1px;height:72px;background:#b4b4b4;"></div>
<div class="a" style="left:883px;top:545px;width:1px;height:72px;background:#b4b4b4;"></div>
<div class="a" style="left:935.5px;top:545px;width:1px;height:72px;background:#b4b4b4;"></div>
<div class="a" style="left:935.5px;top:545px;width:1px;height:72px;background:#9a9a9a;"></div>
<div class="t ui" style="left:247px;top:549px;width:61px;text-align:center;font-size:11.3px;color:#3c3c3c;">종목코드</div>
<div class="t ui" style="left:308px;top:549px;width:53px;text-align:center;font-size:11.3px;color:#3c3c3c;">매매구분</div>
<div class="t ui" style="left:361px;top:549px;width:54px;text-align:center;font-size:11.3px;color:#3c3c3c;">수량</div>
<div class="t ui" style="left:415px;top:549px;width:53px;text-align:center;font-size:11.3px;color:#3c3c3c;">평균단가</div>
<div class="t ui" style="left:468px;top:549px;width:54px;text-align:center;font-size:11.3px;color:#3c3c3c;">현재가</div>
<div class="t ui" style="left:522px;top:549px;width:76px;text-align:center;font-size:11.3px;color:#3c3c3c;">평가손익</div>
<div class="t ui" style="left:598px;top:549px;width:62px;text-align:center;font-size:11.3px;color:#3c3c3c;">만기일자</div>
<div class="t ui" style="left:660px;top:549px;width:71px;text-align:center;font-size:11.3px;color:#3c3c3c;">청산가능수량</div>
<div class="t ui" style="left:731px;top:549px;width:76px;text-align:center;font-size:11.3px;color:#3c3c3c;">옵션시장가치</div>
<div class="t ui" style="left:807px;top:549px;width:76px;text-align:center;font-size:11.3px;color:#3c3c3c;">옵션평가손익</div>
<div class="t ui" style="left:250px;top:564px;font-size:11.5px;color:#111;transform:scaleX(0.88);transform-origin:0 0;">M6BZ23</div>
<div class="t ui" style="left:250px;top:579px;font-size:11.5px;color:#111;transform:scaleX(0.88);transform-origin:0 0;">M6EZ23</div>
<div class="t ui" style="left:308px;top:564px;width:53px;text-align:center;font-size:11.3px;color:#e01212;">매수</div>
<div class="t ui" style="left:308px;top:579px;width:53px;text-align:center;font-size:11.3px;color:#1414d2;">매도</div>
<div class="t ui" style="left:361px;top:564px;width:50px;text-align:right;font-size:11.5px;color:#111;transform:scaleX(0.88);transform-origin:100% 0;">2</div>
<div class="t ui" style="left:361px;top:579px;width:50px;text-align:right;font-size:11.5px;color:#111;transform:scaleX(0.88);transform-origin:100% 0;">1</div>
<div class="t ui" style="left:415px;top:564px;width:49px;text-align:right;font-size:11.5px;color:#111;transform:scaleX(0.88);transform-origin:100% 0;">1,2165</div>
<div class="t ui" style="left:415px;top:579px;width:49px;text-align:right;font-size:11.5px;color:#111;transform:scaleX(0.88);transform-origin:100% 0;">1,0608</div>
<div class="t ui" style="left:468px;top:564px;width:50px;text-align:right;font-size:11.5px;color:#1c4a9c;transform:scaleX(0.88);transform-origin:100% 0;">1,2168</div>
<div class="t ui" style="left:468px;top:579px;width:50px;text-align:right;font-size:11.5px;color:#1c4a9c;transform:scaleX(0.88);transform-origin:100% 0;">1,0617</div>
<div class="t ui" style="left:522px;top:564px;width:72px;text-align:right;font-size:11.5px;color:#d22020;transform:scaleX(0.88);transform-origin:100% 0;">3,750</div>
<div class="t ui" style="left:522px;top:579px;width:72px;text-align:right;font-size:11.5px;color:#1414d2;transform:scaleX(0.88);transform-origin:100% 0;">-11,250</div>
<div class="t ui" style="left:660px;top:564px;width:67px;text-align:right;font-size:11.5px;color:#111;transform:scaleX(0.88);transform-origin:100% 0;">2</div>
<div class="t ui" style="left:660px;top:579px;width:67px;text-align:right;font-size:11.5px;color:#111;transform:scaleX(0.88);transform-origin:100% 0;">1</div>
<div class="t ui" style="left:731px;top:564px;width:72px;text-align:right;font-size:11.5px;color:#111;transform:scaleX(0.88);transform-origin:100% 0;">0,000</div>
<div class="t ui" style="left:731px;top:579px;width:72px;text-align:right;font-size:11.5px;color:#111;transform:scaleX(0.88);transform-origin:100% 0;">0,000</div>
<div class="t ui" style="left:807px;top:564px;width:72px;text-align:right;font-size:11.5px;color:#111;transform:scaleX(0.88);transform-origin:100% 0;">0,000</div>
<div class="t ui" style="left:807px;top:579px;width:72px;text-align:right;font-size:11.5px;color:#111;transform:scaleX(0.88);transform-origin:100% 0;">0,000</div>
<div class="a" style="left:236px;top:501.7px;width:702.7px;height:117.2px;border:2px solid #f01414;"></div>
<div class="a" style="left:936px;top:504px;width:1.2px;height:113px;background:#a82222;"></div>
<div class="a" style="left:0px;top:0px;width:1015px;height:1px;background:#1c1c1c;"></div>
<div class="a" style="left:0px;top:1px;width:1015px;height:1px;background:rgba(28,28,28,0.7);"></div>
</body></html>
